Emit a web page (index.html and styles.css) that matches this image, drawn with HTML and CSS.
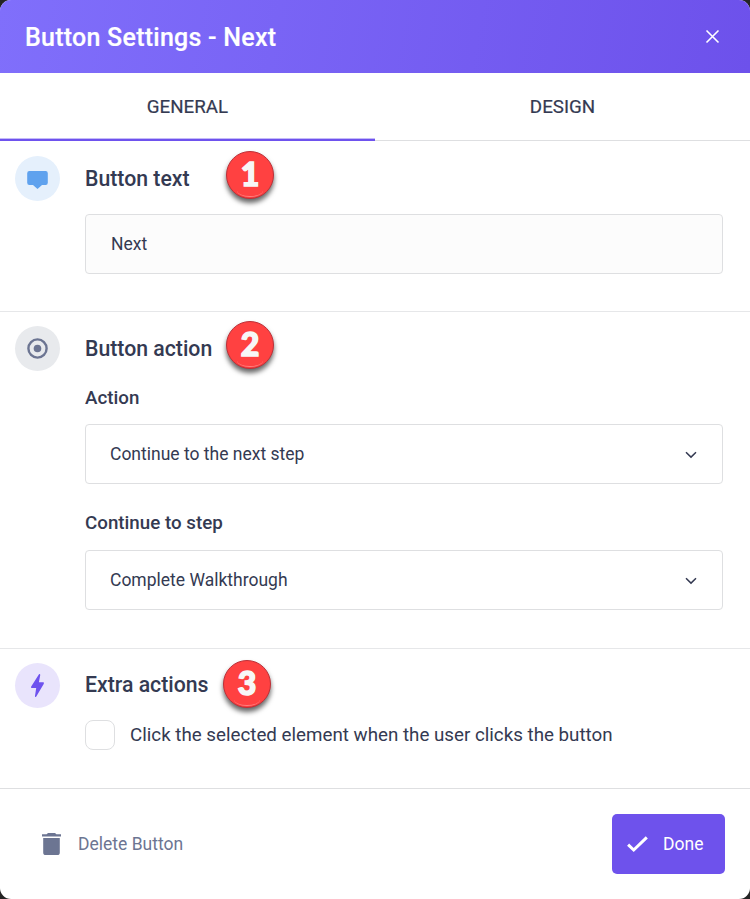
FILE: index.html
```html
<!DOCTYPE html>
<html lang="en">
<head>
<meta charset="utf-8">
<title>Button Settings</title>
<link rel="stylesheet" href="styles.css">
</head>
<body>
<main class="dialog">
  <header class="header">
    <h1 class="title">Button Settings - Next</h1>
    <svg class="close" width="15" height="15" viewBox="0 0 15 15"><path d="M1.500 1.500 13.500 13.500M13.500 1.500 1.500 13.500"/></svg>
  </header>
  <nav class="tabs">
    <div class="tab active"><span>GENERAL</span></div>
    <div class="tab"><span>DESIGN</span></div>
  </nav>
  <section class="section text-section">
    <div class="icon blue">
      <svg width="45" height="45" viewBox="0 0 45 45"><path fill="#5fa2ee" d="M14.4 15H30.6Q32.8 15 32.8 17.2V26.7Q32.8 28.9 30.6 28.9H27L22.5 33 18 28.9H14.4Q12.2 28.9 12.2 26.7V17.2Q12.2 15 14.4 15Z"/></svg>
    </div>
    <div class="content">
      <h2 class="heading">Button text<span class="badge">1</span></h2>
      <div class="field filled"><span>Next</span></div>
    </div>
  </section>
  <section class="section action-section">
    <div class="icon gray">
      <svg width="45" height="45" viewBox="0 0 45 45"><circle cx="22.5" cy="22.5" r="9.1" fill="none" stroke="#6c7592" stroke-width="2.4"/><circle cx="22.5" cy="22.5" r="3.8" fill="#6c7592"/></svg>
    </div>
    <div class="content">
      <h2 class="heading">Button action<span class="badge">2</span></h2>
      <div class="label first">Action</div>
      <div class="field"><span>Continue to the next step</span><svg class="chev" width="12" height="8" viewBox="0 0 12 8"><path d="M1 1.3 6 6.1 11 1.3"/></svg></div>
      <div class="label second">Continue to step</div>
      <div class="field"><span>Complete Walkthrough</span><svg class="chev" width="12" height="8" viewBox="0 0 12 8"><path d="M1 1.3 6 6.1 11 1.3"/></svg></div>
    </div>
  </section>
  <section class="section extra-section">
    <div class="icon purple">
      <svg width="45" height="45" viewBox="0 0 45 45"><path fill="#6e52ee" d="M24 11.2Q25.4 10.7 25.2 12.3L23.9 19.3H28.3Q29.5 19.5 28.7 20.9L21.3 33.4Q19.9 34.6 20 33L21.2 25H16.6Q15.6 24.8 16.2 23.5Z"/></svg>
    </div>
    <div class="content">
      <h2 class="heading extra-heading">Extra actions<span class="badge badge-three">3</span></h2>
      <div class="check"><span class="box"></span><span>Click the selected element when the user clicks the button</span></div>
    </div>
  </section>
  <footer class="footer">
    <div class="delete">
      <svg width="19" height="22" viewBox="0 0 19 22"><path fill="#6c7592" d="M0 1.2H4.6L6 0H13L14.4 1.2H19V3.5H0ZM1.2 5H17.8V19.4Q17.8 22 15.2 22H3.8Q1.2 22 1.2 19.4Z"/></svg>
      <span>Delete Button</span>
    </div>
    <div class="done">
      <svg width="22" height="17" viewBox="0 0 22 17"><path d="M1.1 8.7 6.700 14 19.800 1.3"/></svg>
      <span>Done</span>
    </div>
  </footer>
</main>
</body>
</html>
```
FILE: styles.css
```css
* { box-sizing: border-box; }
body { margin: 0; background: #242424; font-family: Roboto, "Liberation Sans", sans-serif; color: #343a52; }
.dialog { width: 750px; height: 899px; border-radius: 11px; overflow: hidden; background: #fff; display: flex; flex-direction: column; }
.header { height: 73px; padding: 0 30px 0 25px; display: flex; align-items: center; justify-content: space-between; color: #fff; background: linear-gradient(100deg, #806ffb 0%, #6d51eb 100%); }
.title { margin: 0; font-size: 25px; font-weight: 500; line-height: 30px; letter-spacing: .25px; padding-top: 2px; -webkit-text-stroke: .2px #fff; }
.close { fill: none; stroke: #fff; stroke-width: 1.6; }
.tabs { height: 68px; display: flex; }
.tab { flex: 1; display: flex; align-items: center; justify-content: center; font-size: 18.75px; -webkit-text-stroke: .2px #343a52; border-bottom: 1px solid #dedfe1; }
.tab.active { border-bottom: 2px solid #6e52ee; box-shadow: inset 0 -1px #c4baf8; padding-top: 1px; }
.section { display: flex; gap: 25px; padding: 15px 27px 0 15px; border-bottom: 1px solid #e6e7e9; }
.text-section { height: 171px; }
.action-section { height: 337px; padding-top: 14px; }
.extra-section { height: 140px; padding-top: 14px; border-color: #dedfe1; }
.icon { width: 45px; height: 45px; border-radius: 50%; flex: none; }
.icon svg { display: block; }
.blue { background: #e5f0fc; }
.gray { background: #e8eaed; }
.purple { background: #e9e4fc; }
.content { flex: 1; }
.heading { position: relative; margin: 0; height: 45px; font-size: 21.25px; line-height: 46px; font-weight: 500; }
.extra-heading { line-height: 44px; }
.badge { position: absolute; left: 141px; top: -5px; width: 48px; height: 48px; border-radius: 50%; border: 1px solid #bd3038; background: #ff4141; color: #f7f7f7; font: 900 32px/44px Lato, sans-serif; text-align: center; -webkit-text-stroke: 1.5px #f7f7f7; box-shadow: 0 4px 5px rgba(0,0,0,.6); }
.badge::after { content: ""; position: absolute; left: 10px; bottom: 1px; width: 26px; height: 12px; border-bottom: 1px solid #ff8080; border-radius: 0 0 50% 50%; }
.badge-three { left: 138px; top: -3px; }
.field { height: 60px; border: 1px solid #dedfe1; border-radius: 4px; padding: 0 25px 0 24px; display: flex; align-items: center; justify-content: space-between; font-size: 17.5px; }
.filled { margin-top: 13px; padding-left: 25px; background: #fcfcfc; }
.chev { fill: none; stroke: #343a52; stroke-width: 1.5; margin-top: 2px; }
.label { font-size: 18.75px; font-weight: 500; line-height: 24px; }
.first { margin: 15px 0 14px; }
.second { margin: 27px 0 15px; }
.check { display: flex; align-items: center; gap: 15px; height: 30px; margin-top: 12px; font-size: 18.75px; }
.box { width: 30px; height: 30px; border: 1px solid #dedfe1; border-radius: 8px; }
.footer { height: 110px; padding: 0 25px 0 42px; display: flex; align-items: center; justify-content: space-between; }
.delete { display: flex; align-items: center; gap: 17px; color: #6c7592; font-size: 17.5px; }
.done { width: 113px; height: 60px; border-radius: 5px; background: #6e52ec; color: #fff; display: flex; align-items: center; padding-left: 15px; gap: 14px; font-size: 17.5px; }
.done path { fill: none; stroke: #fff; stroke-width: 3; }
```
